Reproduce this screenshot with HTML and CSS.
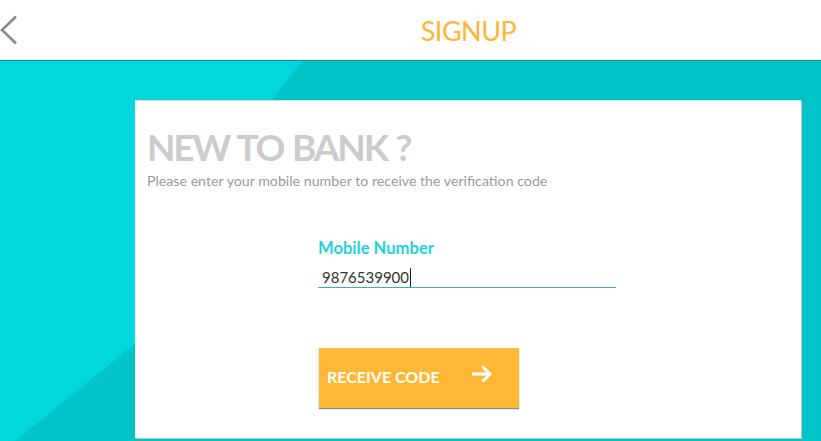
FILE: index.html
```html
<!DOCTYPE html>
<html>
<head>
<meta charset="utf-8">
<link rel="stylesheet" href="styles.css">
</head>
<body>
<header class="topbar">
  <button class="back" aria-label="Back">
    <svg width="18" height="30" viewBox="0 0 18 30"><path d="M16 1.5 L2 15 L16 28.5" fill="none" stroke="#8a8a8a" stroke-width="2.6"/></svg>
  </button>
  <h1 class="title">SIGNUP</h1>
</header>
<main class="stage">
  <section class="card">
    <h2 class="headline">NEW TO BANK ?</h2>
    <p class="sub">Please enter your mobile number to receive the verification code</p>
    <form class="form">
      <label class="label" for="mobile">Mobile Number</label>
      <div class="field"><span class="value">9876539900</span><span class="caret"></span></div>
      <button type="button" class="cta">
        <span>RECEIVE CODE</span>
        <svg width="22" height="18" viewBox="0 0 22 18"><path d="M1 9 H19 M11.5 1.5 L19 9 L11.5 16.5" fill="none" stroke="#fff" stroke-width="3"/></svg>
      </button>
    </form>
  </section>
</main>
</body>
</html>
```
FILE: styles.css
```css
* { box-sizing: border-box; }
html, body { margin: 0; padding: 0; }
body {
  width: 821px;
  height: 441px;
  overflow: hidden;
  font-family: "Lato", "Open Sans", sans-serif;
  background: #00c4c8;
}
.topbar {
  height: 61px;
  background: #fff;
  border-bottom: 1px solid #12929a;
  display: flex;
  align-items: center;
}
.back {
  border: 0;
  background: none;
  padding: 0;
  width: 60px;
  height: 60px;
  display: flex;
  align-items: center;
  justify-content: flex-start;
}
.title {
  margin: 0;
  flex: 1;
  text-align: center;
  margin-left: 56px;
  font-weight: 400;
  font-size: 27px;
  color: #ffb535;
  letter-spacing: -0.5px;
}
.stage {
  position: relative;
  height: 380px;
  background: #00d8de;
  padding: 39px 20px 0 135px;
}
.stage::before {
  content: "";
  position: absolute;
  inset: 0;
  background: #00c4c8;
  clip-path: polygon(302px 0, 821px 0, 821px 380px, 15px 380px, 200px 230px, 272px 39px);
}
.card {
  position: relative;
  width: 666px;
  height: 338px;
  background: #fff;
  border-top: 1px solid #d4e2e6;
  box-shadow: 1px 1px 0 #b9c4c6;
  padding: 23px 12px 0 12px;
}
.headline {
  margin: 0;
  font-size: 37px;
  font-weight: 700;
  color: #cccccc;
  line-height: 46px;
  letter-spacing: -2.2px;
  word-spacing: 2px;
}
.sub {
  margin: 0;
  font-size: 14.2px;
  color: #9a9a9a;
  line-height: 18px;
  margin-top: 2px;
}
.form {
  margin: 48px 0 0 171px;
  width: 298px;
}
.label {
  display: block;
  font-size: 16.6px;
  font-weight: 700;
  color: #1fd3dc;
  line-height: 20px;
}
.field {
  margin-top: 10px;
  height: 20px;
  border-bottom: 1px solid #3fb0ad;
  display: flex;
  align-items: flex-start;
  padding-left: 4px;
}
.value {
  font-size: 15px;
  color: #333;
  line-height: 18px;
}
.caret {
  width: 1px;
  height: 19px;
  background: #222;
  margin-left: 1px;
}
.cta {
  margin: 60px 0 0 1px;
  width: 200px;
  height: 60px;
  border: 0;
  background: #ffb836;
  box-shadow: 0 1px 1px rgba(0,0,0,0.45);
  display: flex;
  align-items: center;
  padding: 0 0 3px 8px;
  gap: 31px;
  font-family: inherit;
  font-size: 16px;
  font-weight: 700;
  color: #fff;
  cursor: pointer;
}
.cta svg { margin-top: -5px; }
```
